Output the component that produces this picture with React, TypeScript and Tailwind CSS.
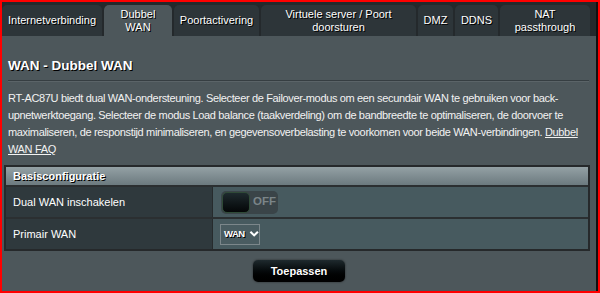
import React from 'react';

const tabs = [
  { label: 'Internetverbinding', w: 'w-[100px]' },
  { label: 'Dubbel\nWAN', w: 'w-[68px]', active: true },
  { label: 'Poortactivering', w: 'w-[85px]' },
  { label: 'Virtuele server / Poort\ndoorsturen', w: 'w-[155px]' },
  { label: 'DMZ', w: 'w-[35px]' },
  { label: 'DDNS', w: 'w-[43px]' },
  { label: 'NAT\npassthrough', w: 'w-[90px]' },
];

const shadow = '[text-shadow:1px_1px_0_#000]';

export default function App() {
  return (
    <div className="w-[600px] h-[293px] border-2 border-[#ff0000] bg-[#24292c] font-['Liberation_Sans',Arial,sans-serif] overflow-hidden">
      <div className="h-full flex flex-col border-r-2 border-[#111]">
        {/* Tab strip */}
        <div className="flex items-end gap-[2px] pt-[3px] h-[34px]">
          {tabs.map((t) => (
            <div
              key={t.label}
              className={`${t.w} h-[31px] shrink-0 rounded-t-[5px] flex items-center justify-center text-center whitespace-pre-line text-[11px] leading-[13px] text-white ${shadow} ${
                t.active ? 'bg-[#4d575b]' : 'bg-[#2d3539]'
              }`}
            >
              {t.label}
            </div>
          ))}
        </div>

        {/* Content panel */}
        <div className="flex-1 bg-[#4d575b] px-[6px] text-white">
          <h1 className={`mt-[22px] text-[13.5px] leading-[16px] font-bold ${shadow}`}>WAN - Dubbel WAN</h1>
          <div className="mt-[6px] mr-[1px] h-[2px] border-t border-[#363e42] border-b border-b-[#5b6468]" />

          <p className="mt-[8px] text-[11px] leading-[17px] tracking-[-0.35px] text-[#f2f2f2] whitespace-nowrap">
            RT-AC87U biedt dual WAN-ondersteuning. Selecteer de Failover-modus om een secundair WAN te gebruiken voor back-
            <br />
            upnetwerktoegang. Selecteer de modus Load balance (taakverdeling) om de bandbreedte te optimaliseren, de doorvoer te
            <br />
            maximaliseren, de responstijd minimaliseren, en gegevensoverbelasting te voorkomen voor beide WAN-verbindingen.{' '}
            <a className="underline">Dubbel</a>
            <br />
            <a className="underline">WAN FAQ</a>
          </p>

          {/* Basisconfiguratie table */}
          <div className="mt-[7px] -ml-[4px] border-2 border-[#26292b]">
            <div className={`h-[20px] flex items-center px-[7px] bg-gradient-to-b from-[#94a1a5] to-[#6c7a7f] border-b-2 border-[#2b2f31] text-[11px] font-bold ${shadow}`}>
              Basisconfiguratie
            </div>
            <div className="flex h-[32px] border-b-2 border-[#2b2f31]">
              <div className="w-[207px] shrink-0 bg-[#2f393d] border-r border-[#262b2d] flex items-center px-[7px] text-[11px]">
                Dual WAN inschakelen
              </div>
              <div className="flex-1 bg-[#475a5f] flex items-center pl-[8px]">
                <div className="w-[57px] h-[23px] rounded-[5px] bg-[#3a4448] flex items-center p-[1px]">
                  <div className="w-[28px] h-[21px] rounded-[5px] bg-gradient-to-b from-[#1e2a2e] to-[#050708] border border-[#2f4a37]" />
                  <span className="ml-[3px] text-[11.5px] font-bold text-[#7b8588]">OFF</span>
                </div>
              </div>
            </div>
            <div className="flex h-[30px]">
              <div className="w-[207px] shrink-0 bg-[#2f393d] border-r border-[#262b2d] flex items-center px-[7px] text-[11px]">
                Primair WAN
              </div>
              <div className="flex-1 bg-[#475a5f] flex items-center pl-[7px]">
                <div className="w-[40px] h-[21px] border border-[#7c878b] bg-[#4a5c61] flex items-center pl-[3px] gap-[4px]">
                  <span className={`text-[9.5px] font-bold tracking-[-0.5px] ${shadow}`}>WAN</span>
                  <svg width="11" height="8" viewBox="0 0 11 8">
                    <path d="M1.5 1.5 L5.5 5.5 L9.5 1.5" stroke="#fff" strokeWidth="2.2" fill="none" />
                  </svg>
                </div>
              </div>
            </div>
          </div>

          <div className="flex justify-center mt-[9px]">
            <button className={`w-[92px] h-[22px] rounded-[5px] bg-gradient-to-b from-[#1f2a2e] to-[#000] shadow-[0_0_2px_#222] text-[11px] font-bold text-white ${shadow}`}>
              Toepassen
            </button>
          </div>
        </div>
      </div>
    </div>
  );
}
